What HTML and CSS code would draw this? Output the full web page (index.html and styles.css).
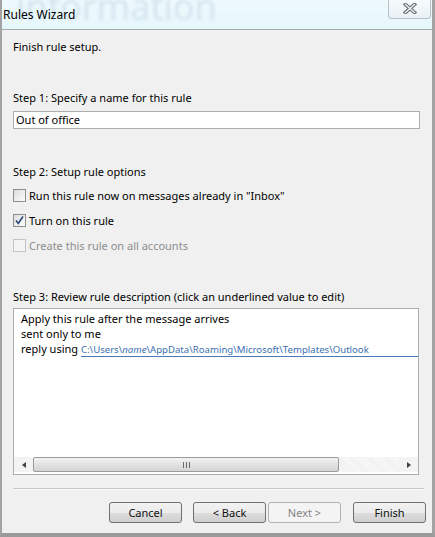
FILE: index.html
```html
<!DOCTYPE HTML>
<html>

<head>
    <link rel="stylesheet" href="styles.css">
</head>

<body>
    <div class="window">
        <div class="titlebar">
            <span class="ghost">information</span>
            <span class="title">Rules Wizard</span>
            <div class="close">
                <svg width="14" height="11" viewBox="0 0 14 11">
                    <path d="M2.5 1.5 L11.5 9.5 M11.5 1.5 L2.5 9.5" stroke="#6a6e74" stroke-width="3.6" stroke-linecap="square" fill="none" />
                    <path d="M2.5 1.5 L11.5 9.5 M11.5 1.5 L2.5 9.5" stroke="#eef2f5" stroke-width="1.4" stroke-linecap="square" fill="none" />
                </svg>
            </div>
        </div>

        <div class="content">
            <p class="intro">Finish rule setup.</p>

            <p class="step step1">Step 1: Specify a name for this rule</p>
            <div class="name">Out of office</div>

            <p class="step step2">Step 2: Setup rule options</p>
            <div class="option first">
                <span class="box"></span>
                <span>Run this rule now on messages already in "Inbox"</span>
            </div>
            <div class="option">
                <span class="box">
                    <svg width="11" height="11" viewBox="0 0 11 11">
                        <path d="M2 5.5 L4.3 8.5 L9 1.5" stroke="#2a4a7a" stroke-width="1.6" fill="none" />
                    </svg>
                </span>
                <span>Turn on this rule</span>
            </div>
            <div class="option disabled">
                <span class="box"></span>
                <span>Create this rule on all accounts</span>
            </div>

            <p class="step step3">Step 3: Review rule description (click an underlined value to edit)</p>
            <div class="desc">
                <div class="desc-text">
                    <div>Apply this rule after the message arrives</div>
                    <div>sent only to me</div>
                    <div>reply using <span class="path">C:\Users\<i>name</i>\AppData\Roaming\Microsoft\Templates\Outlook</span></div>
                </div>
                <div class="hscroll">
                    <span class="arrow left"></span>
                    <div class="track">
                        <div class="thumb"><span class="grip"></span></div>
                    </div>
                    <span class="arrow right"></span>
                </div>
            </div>

            <div class="sep"></div>

            <div class="buttons">
                <div class="btn">Cancel</div>
                <div class="btn back">&lt; Back</div>
                <div class="btn next off">Next &gt;</div>
                <div class="btn finish">Finish</div>
            </div>
        </div>
    </div>
</body>

</html>
```

FILE: styles.css
```css
body {
    margin: 0;
    font-family: "Noto Sans", "Liberation Sans", sans-serif;
    font-size: 11px;
    color: #000;
}

.window {
    width: 435px;
    height: 537px;
    box-sizing: border-box;
    border-left: 2px solid #a3a3a3;
    border-right: 3px solid #a3a3a3;
    border-bottom: 4px solid #9a9a9a;
    background: #f0f0f0;
    overflow: hidden;
}

.titlebar {
    position: relative;
    height: 29px;
    border-bottom: 1px solid #a8aaad;
    background: linear-gradient(to bottom, #eef9fd, #e6f7fb);
    overflow: hidden;
}

.ghost {
    position: absolute;
    left: 14px;
    top: -18px;
    font-size: 36px;
    color: #d5e5ee;
    filter: blur(1.4px);
    white-space: nowrap;
}

.title {
    position: absolute;
    left: 1px;
    top: 7px;
    font-size: 12px;
    line-height: 16px;
}

.close {
    position: absolute;
    right: 1px;
    top: -1px;
    width: 41px;
    height: 19px;
    border: 1px solid #b9c0c8;
    border-top: none;
    border-bottom-left-radius: 4px;
    border-bottom-right-radius: 4px;
    background: linear-gradient(to bottom, #f7fbfd, #e9f1f5);
    display: flex;
    align-items: center;
    justify-content: center;
}

.content {
    padding: 0 0 0 11px;
}

p {
    margin: 0;
    line-height: 16px;
}

.intro {
    padding-top: 9px;
}

.step1 {
    margin-top: 35px;
}

.name {
    margin-top: 5px;
    width: 407px;
    height: 18px;
    box-sizing: border-box;
    border: 1px solid #abadb3;
    background: #fff;
    padding-left: 2px;
    line-height: 16px;
}

.step2 {
    margin-top: 35px;
}

.option {
    display: flex;
    align-items: center;
    gap: 3px;
    height: 16px;
    margin-top: 9px;
}

.option.first {
    margin-top: 7px;
}

.box {
    width: 13px;
    height: 13px;
    box-sizing: border-box;
    border: 1px solid #8e8f8f;
    background: linear-gradient(135deg, #dcdcdc, #fdfdfd);
    display: flex;
    align-items: center;
    justify-content: center;
}

.option.disabled {
    color: #8d8d8d;
}

.option.disabled .box {
    border-color: #c4c4c4;
    background: #f4f4f4;
}

.step3 {
    margin-top: 36px;
}

.desc {
    margin-top: 3px;
    width: 406px;
    height: 167px;
    box-sizing: border-box;
    border: 1px solid #abadb3;
    background: #fff;
    display: flex;
    flex-direction: column;
    justify-content: space-between;
}

.desc-text {
    padding: 2px 0 0 7px;
    line-height: 15px;
    white-space: nowrap;
    overflow: hidden;
}

.path {
    display: inline-block;
    width: 338px;
    font-size: 9.6px;
    color: #4070b0;
    border-bottom: 1px solid #4a78b4;
    line-height: 13px;
}

.hscroll {
    height: 15px;
    margin: 0 0 2px 0;
    display: flex;
    align-items: stretch;
    background: #f3f3f3;
}

.arrow {
    width: 19px;
    display: flex;
    align-items: center;
    justify-content: center;
}

.arrow::before {
    content: "";
    border-top: 3px solid transparent;
    border-bottom: 3px solid transparent;
}

.arrow.left::before {
    border-right: 4px solid #404040;
}

.arrow.right::before {
    border-left: 4px solid #404040;
}

.track {
    flex: 1;
    background: repeating-linear-gradient(45deg, #f0f0f0 0 1px, #f8f8f8 1px 2px);
}

.thumb {
    width: 306px;
    height: 15px;
    box-sizing: border-box;
    border: 1px solid #9b9b9b;
    border-radius: 2px;
    background: linear-gradient(to bottom, #f3f3f3, #e2e2e2 50%, #d4d4d4);
    display: flex;
    align-items: center;
    justify-content: center;
}

.grip {
    width: 7px;
    height: 6px;
    background: repeating-linear-gradient(to right, #6a6a6a 0 1px, transparent 1px 3px);
}

.sep {
    margin-top: 13px;
    width: 411px;
    border-top: 1px solid #c8c8c8;
    border-bottom: 1px solid #fbfbfb;
}

.buttons {
    margin-top: 12px;
    display: flex;
    padding-left: 96px;
}

.btn {
    width: 73px;
    height: 21px;
    box-sizing: border-box;
    border: 1px solid #707070;
    border-radius: 3px;
    background: linear-gradient(to bottom, #f2f2f2, #ebebeb 50%, #dddddd 51%, #cfcfcf);
    display: flex;
    align-items: center;
    justify-content: center;
    line-height: 16px;
    color: #111;
}

.back {
    margin-left: 11px;
}

.next {
    margin-left: 2px;
}

.finish {
    margin-left: 12px;
}

.btn.off {
    border-color: #adb2b5;
    background: #f4f4f4;
    color: #838383;
}
```
